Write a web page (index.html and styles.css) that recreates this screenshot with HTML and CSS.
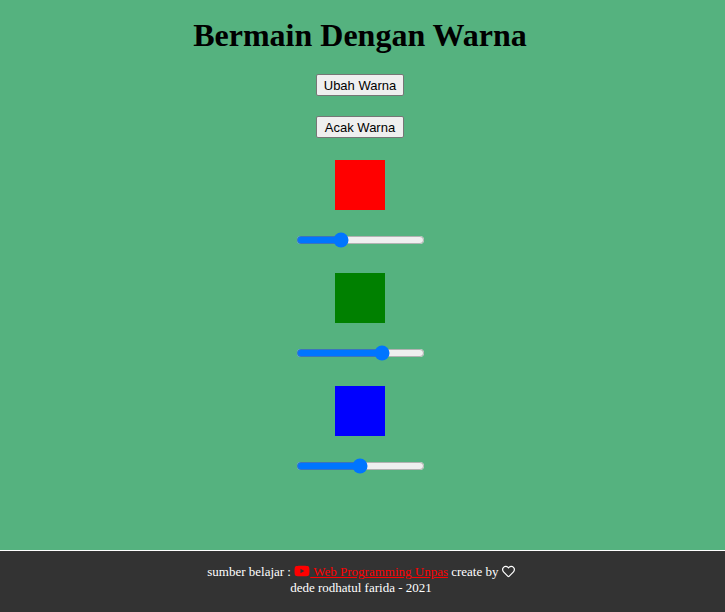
FILE: index.html
```html
<!DOCTYPE html>
<html lang="id">
<head>
  <meta charset="utf-8">
  <title>Bermain Dengan Warna</title>
  <link rel="stylesheet" href="styles.css">
</head>
<body>
  <main class="content">
    <h1 class="title">Bermain Dengan Warna</h1>
    <div class="actions">
      <button type="button" class="button">Ubah Warna</button>
      <button type="button" class="button">Acak Warna</button>
    </div>
    <div class="channels">
      <div class="channel">
        <label class="swatch swatch-red" for="red" aria-label="Merah"></label>
        <input class="slider" type="range" id="red" min="0" max="255" value="85">
      </div>
      <div class="channel">
        <label class="swatch swatch-green" for="green" aria-label="Hijau"></label>
        <input class="slider" type="range" id="green" min="0" max="255" value="178">
      </div>
      <div class="channel">
        <label class="swatch swatch-blue" for="blue" aria-label="Biru"></label>
        <input class="slider" type="range" id="blue" min="0" max="255" value="127">
      </div>
    </div>
  </main>
  <footer class="footer">
    <p class="credit">sumber belajar :
      <a class="source" href="#"><svg class="icon-youtube" viewBox="0 0 576 512" aria-hidden="true"><path fill="currentColor" d="M549.655 124.083c-6.281-23.65-24.787-42.276-48.284-48.597C458.781 64 288 64 288 64S117.22 64 74.629 75.486c-23.497 6.322-42.003 24.947-48.284 48.597-11.412 42.867-11.412 132.305-11.412 132.305s0 89.438 11.412 132.305c6.281 23.65 24.787 41.5 48.284 47.821C117.22 448 288 448 288 448s170.78 0 213.371-11.486c23.497-6.321 42.003-24.171 48.284-47.821 11.412-42.867 11.412-132.305 11.412-132.305s0-89.438-11.412-132.305zm-317.51 213.508V175.185l142.739 81.205-142.739 81.201z"/></svg> Web Programming Unpas</a>
      create by <svg class="icon-heart" viewBox="0 0 512 512" aria-hidden="true"><path fill="currentColor" d="M458.4 64.3C400.6 15.7 311.3 23 256 79.3 200.7 23 111.4 15.6 53.6 64.3-21.6 127.6-10.6 230.8 43 285.5l175.4 178.7c10 10.2 23.4 15.9 37.6 15.9 14.3 0 27.6-5.6 37.6-15.8L469 285.6c53.5-54.7 64.7-157.9-10.6-221.3zm-23.6 187.5L259.4 430.5c-2.4 2.4-4.4 2.4-6.8 0L77.2 251.8c-36.5-37.2-43.9-107.6 7.3-150.7 38.9-32.7 98.9-27.8 136.5 10.5l35 35.7 35-35.7c37.8-38.5 97.8-43.2 136.5-10.6 51.1 43.1 43.5 113.9 7.3 150.8z"/></svg><br>
      dede rodhatul farida - 2021</p>
  </footer>
</body>
</html>
```
FILE: styles.css
```css
body {
  display: flex;
  flex-direction: column;
  min-height: 100vh;
  margin: 0;
  background: rgb(85, 178, 127);
  font-family: "Liberation Serif", "Times New Roman", serif;
  text-align: center;
}

.content {
  flex: 1;
  padding: 17px 5px 0 0;
}

.title {
  margin: 0 0 21px;
  font-size: 32px;
  line-height: 36px;
  color: #000;
}

.actions {
  display: flex;
  flex-direction: column;
  align-items: center;
  gap: 20px;
  margin-bottom: 22px;
}

.button {
  box-sizing: border-box;
  width: 88px;
  height: 22px;
  padding: 1px 0 0;
  border: 1px solid #767676;
  border-radius: 2px;
  background: #efefef;
  color: #000;
  font: 13px/20px "Liberation Sans", Arial, sans-serif;
}

.channels {
  display: flex;
  flex-direction: column;
  gap: 25px;
}

.channel {
  display: flex;
  flex-direction: column;
  align-items: center;
  gap: 22px;
}

.swatch {
  width: 50px;
  height: 50px;
}

.swatch-red {
  background: #f00;
}

.swatch-green {
  background: #008000;
}

.swatch-blue {
  background: #00f;
}

.slider {
  width: 129px;
  height: 16px;
  margin: 0;
  accent-color: #0075ff;
}

.footer {
  padding: 13px 3px 16px 0;
  border-top: 1px solid #fff;
  background: #333;
  color: #fff;
}

.credit {
  margin: 0;
  font-size: 13px;
  line-height: 16px;
}

.source {
  color: #f00;
}

.icon-youtube {
  width: 16px;
  height: 14px;
  vertical-align: -2px;
}

.icon-heart {
  width: 13px;
  height: 13px;
  vertical-align: -2px;
}
```
